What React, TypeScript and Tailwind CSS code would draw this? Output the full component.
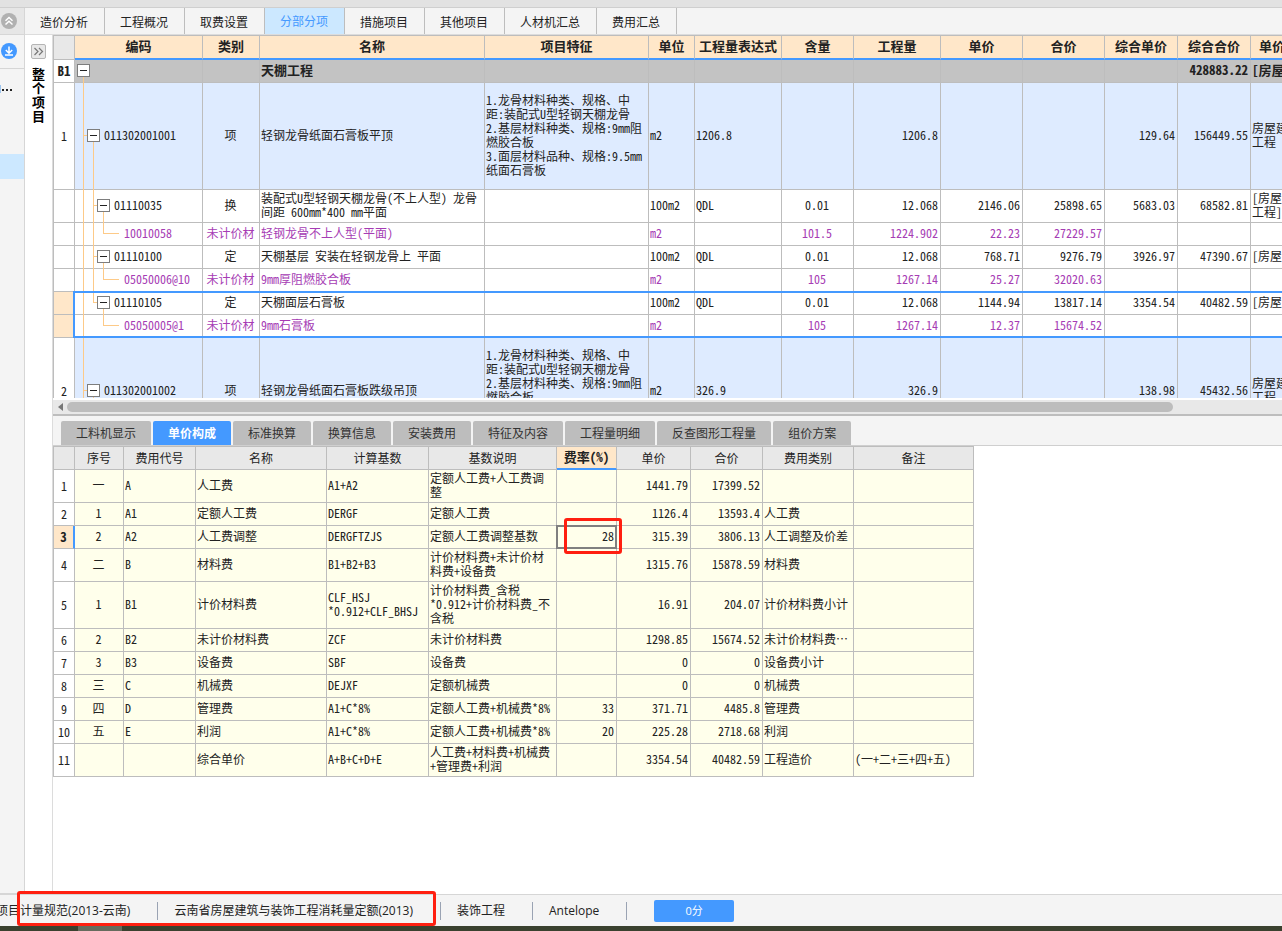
import React from "react";

type Align = "left" | "center" | "right";

const alignClass: Record<Align, string> = {
  left: "text-left",
  center: "text-center",
  right: "text-right",
};

interface Column {
  title: string;
  width: number;
  align: Align;
}

const mainTabs = ["造价分析", "工程概况", "取费设置", "分部分项", "措施项目", "其他项目", "人材机汇总", "费用汇总"];
const activeMainTab = "分部分项";

const detailTabs = [
  "工料机显示",
  "单价构成",
  "标准换算",
  "换算信息",
  "安装费用",
  "特征及内容",
  "工程量明细",
  "反查图形工程量",
  "组价方案",
];
const activeDetailTab = "单价构成";

const itemColumns: Column[] = [
  { title: "编码", width: 128, align: "left" },
  { title: "类别", width: 57, align: "center" },
  { title: "名称", width: 225, align: "left" },
  { title: "项目特征", width: 164, align: "left" },
  { title: "单位", width: 46, align: "left" },
  { title: "工程量表达式", width: 87, align: "left" },
  { title: "含量", width: 72, align: "center" },
  { title: "工程量", width: 87, align: "right" },
  { title: "单价", width: 82, align: "right" },
  { title: "合价", width: 82, align: "right" },
  { title: "综合单价", width: 73, align: "right" },
  { title: "综合合价", width: 73, align: "right" },
  { title: "单价", width: 44, align: "left" },
];

type Kind = "section" | "item" | "quota" | "material";

interface ItemRow {
  no: string;
  kind: Kind;
  code: string;
  /** Last child of its parent: the parent's guide line stops here. */
  last?: boolean;
  selected?: boolean;
  cells: string[];
}

const itemRows: ItemRow[] = [
  { no: "B1", kind: "section", code: "", cells: ["", "天棚工程", "", "", "", "", "", "", "", "", "428883.22", "[房屋"] },
  {
    no: "1",
    kind: "item",
    code: "011302001001",
    cells: [
      "项",
      "轻钢龙骨纸面石膏板平顶",
      "1.龙骨材料种类、规格、中\n距:装配式U型轻钢天棚龙骨\n2.基层材料种类、规格:9mm阻\n燃胶合板\n3.面层材料品种、规格:9.5mm\n纸面石膏板",
      "m2",
      "1206.8",
      "",
      "1206.8",
      "",
      "",
      "129.64",
      "156449.55",
      "房屋建\n工程",
    ],
  },
  {
    no: "",
    kind: "quota",
    code: "01110035",
    cells: [
      "换",
      "装配式U型轻钢天棚龙骨(不上人型) 龙骨\n间距 600mm*400 mm平面",
      "",
      "100m2",
      "QDL",
      "0.01",
      "12.068",
      "2146.06",
      "25898.65",
      "5683.03",
      "68582.81",
      "[房屋\n工程]",
    ],
  },
  {
    no: "",
    kind: "material",
    code: "10010058",
    cells: ["未计价材", "轻钢龙骨不上人型(平面)", "", "m2", "", "101.5", "1224.902", "22.23", "27229.57", "", "", ""],
  },
  {
    no: "",
    kind: "quota",
    code: "01110100",
    cells: [
      "定",
      "天棚基层 安装在轻钢龙骨上 平面",
      "",
      "100m2",
      "QDL",
      "0.01",
      "12.068",
      "768.71",
      "9276.79",
      "3926.97",
      "47390.67",
      "[房屋",
    ],
  },
  {
    no: "",
    kind: "material",
    code: "05050006@10",
    cells: ["未计价材", "9mm厚阻燃胶合板", "", "m2", "", "105", "1267.14", "25.27", "32020.63", "", "", ""],
  },
  {
    no: "",
    kind: "quota",
    code: "01110105",
    last: true,
    selected: true,
    cells: [
      "定",
      "天棚面层石膏板",
      "",
      "100m2",
      "QDL",
      "0.01",
      "12.068",
      "1144.94",
      "13817.14",
      "3354.54",
      "40482.59",
      "[房屋",
    ],
  },
  {
    no: "",
    kind: "material",
    code: "05050005@1",
    last: true,
    selected: true,
    cells: ["未计价材", "9mm石膏板", "", "m2", "", "105", "1267.14", "12.37", "15674.52", "", "", ""],
  },
  {
    no: "2",
    kind: "item",
    code: "011302001002",
    cells: [
      "项",
      "轻钢龙骨纸面石膏板跌级吊顶",
      "1.龙骨材料种类、规格、中\n距:装配式U型轻钢天棚龙骨\n2.基层材料种类、规格:9mm阻\n燃胶合板\n3.面层材料品种、规格:9.5mm\n纸面石膏板",
      "m2",
      "326.9",
      "",
      "326.9",
      "",
      "",
      "138.98",
      "45432.56",
      "房屋建\n工程",
    ],
  },
];

const feeColumns: Column[] = [
  { title: "序号", width: 49, align: "center" },
  { title: "费用代号", width: 72, align: "left" },
  { title: "名称", width: 131, align: "left" },
  { title: "计算基数", width: 102, align: "left" },
  { title: "基数说明", width: 128, align: "left" },
  { title: "费率(%)", width: 60, align: "right" },
  { title: "单价", width: 74, align: "right" },
  { title: "合价", width: 72, align: "right" },
  { title: "费用类别", width: 91, align: "left" },
  { title: "备注", width: 120, align: "left" },
];
const RATE_COLUMN = 5;
const CURRENT_FEE_ROW = 2;

const feeRows: string[][] = [
  ["一", "A", "人工费", "A1+A2", "定额人工费+人工费调\n整", "", "1441.79", "17399.52", "", ""],
  ["1", "A1", "定额人工费", "DERGF", "定额人工费", "", "1126.4", "13593.4", "人工费", ""],
  ["2", "A2", "人工费调整", "DERGFTZJS", "定额人工费调整基数", "28", "315.39", "3806.13", "人工调整及价差", ""],
  ["二", "B", "材料费", "B1+B2+B3", "计价材料费+未计价材\n料费+设备费", "", "1315.76", "15878.59", "材料费", ""],
  [
    "1",
    "B1",
    "计价材料费",
    "CLF_HSJ\n*0.912+CLF_BHSJ",
    "计价材料费_含税\n*0.912+计价材料费_不\n含税",
    "",
    "16.91",
    "204.07",
    "计价材料费小计",
    "",
  ],
  ["2", "B2", "未计价材料费", "ZCF", "未计价材料费", "", "1298.85", "15674.52", "未计价材料费⋯", ""],
  ["3", "B3", "设备费", "SBF", "设备费", "", "0", "0", "设备费小计", ""],
  ["三", "C", "机械费", "DEJXF", "定额机械费", "", "0", "0", "机械费", ""],
  ["四", "D", "管理费", "A1+C*8%", "定额人工费+机械费*8%", "33", "371.71", "4485.8", "管理费", ""],
  ["五", "E", "利润", "A1+C*8%", "定额人工费+机械费*8%", "20", "225.28", "2718.68", "利润", ""],
  ["", "", "综合单价", "A+B+C+D+E", "人工费+材料费+机械费\n+管理费+利润", "", "3354.54", "40482.59", "工程造价", "(一+二+三+四+五)"],
];

const rowHeight: Record<Kind, string> = {
  section: "h-[23px]",
  item: "h-[107px]",
  quota: "h-[23px]",
  material: "h-[23px]",
};

const rowTone: Record<Kind, string> = {
  section: "bg-[#c3c3c3] font-bold text-[13px]",
  item: "bg-[#deebff]",
  quota: "bg-white",
  material: "bg-white text-[#a63cb4]",
};

const guide = "absolute w-px bg-[#fdca88]";
const stub = "absolute top-1/2 -mt-px h-px bg-[#fdca88]";

function ToggleBox({ label }: { label: string }) {
  return (
    <button
      type="button"
      aria-label={label}
      className="relative flex size-[13px] shrink-0 items-center justify-center border border-[#7d7d7d] bg-white"
    >
      <span className="h-px w-[7px] bg-[#222]" />
    </button>
  );
}

function TreeCell({ row }: { row: ItemRow }) {
  const { kind, last } = row;
  return (
    <td className="relative border-r border-b border-[#bdbdbd] p-0 pb-0.5">
      <span className={`${guide} left-2 -bottom-px ${kind === "section" ? "top-1/2" : "top-0"}`} />
      {kind === "item" && (
        <>
          <span className={`${stub} left-2 w-1`} />
          <span className={`${guide} top-1/2 -bottom-px left-[18px]`} />
        </>
      )}
      {kind === "quota" && (
        <>
          <span className={`${guide} top-0 left-[18px] ${last ? "bottom-1/2" : "-bottom-px"}`} />
          <span className={`${stub} left-[18px] w-1`} />
          <span className={`${guide} top-1/2 -bottom-px left-7`} />
        </>
      )}
      {kind === "material" && (
        <>
          {!last && <span className={`${guide} top-0 -bottom-px left-[18px]`} />}
          <span className={`${guide} top-0 bottom-1/2 left-7`} />
          <span className={`${stub} left-7 w-4`} />
        </>
      )}
      {kind === "section" && (
        <div className="flex items-center pl-0.5">
          <ToggleBox label="折叠 B1" />
        </div>
      )}
      {kind === "item" && (
        <div className="flex items-center gap-1 pl-3">
          <ToggleBox label={`折叠 ${row.code}`} />
          {row.code}
        </div>
      )}
      {kind === "quota" && (
        <div className="flex items-center gap-1 pl-[22px]">
          <ToggleBox label={`折叠 ${row.code}`} />
          {row.code}
        </div>
      )}
      {kind === "material" && <div className="pl-[49px]">{row.code}</div>}
    </td>
  );
}

function ItemTable() {
  return (
    <table className="w-max table-fixed border-separate border-spacing-0 border-t border-l border-[#bdbdbd] text-xs leading-[14px] whitespace-pre text-[#222] [font-feature-settings:'hwid']">
      <colgroup>
        <col style={{ width: 21 }} />
        {itemColumns.map((c, i) => (
          <col key={i} style={{ width: c.width }} />
        ))}
      </colgroup>
      <thead>
        <tr className="h-6 text-[13px]">
          <td className="border-r border-b border-[#bdbdbd] bg-[#e8e8e8] p-0" />
          {itemColumns.map((c, i) => (
            <th
              key={i}
              scope="col"
              className={`border-r border-b-2 border-r-[#bdbdbd] border-b-[#4499ff] bg-[#ffe7c9] p-0 pb-0.5 font-bold ${
                i === itemColumns.length - 1 ? "pl-2 text-left" : "text-center"
              }`}
            >
              {c.title}
            </th>
          ))}
        </tr>
      </thead>
      <tbody>
        {itemRows.map((row, r) => (
          <tr key={r} className={`${row.code === "01110035" ? "h-[33px]" : rowHeight[row.kind]} ${rowTone[row.kind]}`}>
            <th
              scope="row"
              className={`relative border-r border-b border-[#bdbdbd] p-0 text-center text-[#222] ${
                row.kind === "section" ? "font-bold" : "font-normal"
              } ${row.selected ? "bg-[#ffe7c9]" : "bg-white"}`}
            >
              {row.no}
              {row.selected && row.kind === "quota" && (
                <span className="pointer-events-none absolute -top-px left-[19px] z-10 h-[47px] w-[3000px] border-2 border-[#4499ff]" />
              )}
            </th>
            <TreeCell row={row} />
            {row.cells.map((text, i) => (
              <td
                key={i}
                className={`border-r border-b border-[#bdbdbd] pt-0 pr-0.5 pb-0.5 pl-px ${alignClass[itemColumns[i + 1].align]}`}
              >
                {text}
              </td>
            ))}
          </tr>
        ))}
      </tbody>
    </table>
  );
}

function FeeTable() {
  return (
    <table className="w-max table-fixed border-separate border-spacing-0 border-t border-l border-[#bdbdbd] text-xs leading-[14px] whitespace-pre text-[#222] [font-feature-settings:'hwid']">
      <colgroup>
        <col style={{ width: 21 }} />
        {feeColumns.map((c, i) => (
          <col key={i} style={{ width: c.width }} />
        ))}
      </colgroup>
      <thead>
        <tr className="h-[23px]">
          <td className="border-r border-b border-[#bdbdbd] bg-[#e8e8e8] p-0" />
          {feeColumns.map((c, i) => (
            <th
              key={i}
              scope="col"
              className={`border-r border-r-[#bdbdbd] p-0 text-center ${
                i === RATE_COLUMN
                  ? "border-b-2 border-b-[#4499ff] bg-[#ffe7c9] pb-0.5 text-[13px] font-bold"
                  : "border-b border-b-[#bdbdbd] bg-[#e8e8e8] font-normal"
              }`}
            >
              {c.title}
            </th>
          ))}
        </tr>
      </thead>
      <tbody>
        {feeRows.map((cells, r) => {
          const lines = Math.max(...cells.map((t) => t.split("\n").length));
          const current = r === CURRENT_FEE_ROW;
          return (
            <tr
              key={r}
              className={`bg-[#ffffeb] ${lines === 1 ? "h-[23px]" : lines === 2 ? "h-[33px]" : "h-[47px]"}`}
            >
              <th
                scope="row"
                className={`border-b border-b-[#bdbdbd] p-0 text-center ${
                  current
                    ? "border-r-2 border-r-[#4499ff] bg-[#ffe7c9] text-[13px] font-bold"
                    : "border-r border-r-[#bdbdbd] bg-white font-normal"
                }`}
              >
                {r + 1}
              </th>
              {cells.map((text, i) => (
                <td
                  key={i}
                  className={`relative border-r border-b border-[#bdbdbd] pt-0 pr-0.5 pb-0.5 pl-px ${alignClass[feeColumns[i].align]}`}
                >
                  {text}
                  {current && i === RATE_COLUMN && (
                    <>
                      <span className="pointer-events-none absolute -inset-px z-10 border-2 border-[#808080]" />
                      <span className="pointer-events-none absolute -top-2 left-[7px] z-20 h-9 w-[58px] rounded-[3px] border-3 border-[#ff1f10]" />
                    </>
                  )}
                </td>
              ))}
            </tr>
          );
        })}
      </tbody>
    </table>
  );
}

function Sidebar() {
  return (
    <aside className="flex w-[25px] shrink-0 flex-col border-r border-b border-[#d6d6d6] bg-[#f4f4f4]">
      <div className="flex h-[27px] items-center border-b border-[#d6d6d6] bg-[#e6e6e6] pl-px">
        <button type="button" aria-label="收起" className="size-4">
          <svg viewBox="0 0 16 16" className="size-4" fill="none">
            <circle cx="8" cy="8" r="8" fill="#b1b1b1" />
            <path d="M4.5 7.8 8 4.5l3.5 3.3M4.5 11.5 8 8.2l3.5 3.3" stroke="#fff" strokeWidth="1.5" />
          </svg>
        </button>
      </div>
      <div className="flex h-[34px] items-start border-b border-[#d6d6d6] pt-2 pl-px">
        <button type="button" aria-label="下载" className="size-4">
          <svg viewBox="0 0 16 16" className="size-4" fill="none">
            <circle cx="8" cy="8" r="8" fill="#4499ff" />
            <path d="M8 3.5v6.3M4.8 7 8 10.2 11.2 7M4 12h8" stroke="#fff" strokeWidth="1.5" />
          </svg>
        </button>
      </div>
      <div className="flex h-[85px] items-start gap-px pt-3">
        <span className="mt-1 h-2 w-px bg-[#9cc4ee]" />
        <span className="mt-2 flex gap-0.5">
          <i className="size-0.5 bg-[#222]" />
          <i className="size-0.5 bg-[#222]" />
          <i className="size-0.5 bg-[#222]" />
        </span>
      </div>
      <div className="h-[25px] bg-[#cce8ff]" />
    </aside>
  );
}

function FooterDivider() {
  return <span className="mr-4 ml-[27px] h-[18px] w-px bg-[#9aa3b3]" />;
}

export default function App() {
  return (
    <div
      lang="zh-CN"
      className="flex h-screen flex-col overflow-hidden bg-white font-['Noto_Sans_CJK_SC',sans-serif] text-xs text-[#222]"
    >
      <div className="h-2 shrink-0 border-b border-[#cfcfcf] bg-[#e2e2e2]" />

      <div className="flex min-h-0 flex-1">
        <Sidebar />
        <div className="flex min-w-0 flex-1 flex-col">
          <div role="tablist" className="flex h-[27px] shrink-0 border-b border-[#dcdcdc] bg-[#f4f4f4]">
            {mainTabs.map((tab) => (
              <button
                key={tab}
                type="button"
                role="tab"
                aria-selected={tab === activeMainTab}
                className={`border-r border-[#bdbdbd] pr-4 pl-[15px] ${
                  tab === activeMainTab ? "bg-[#cce8ff] text-[#4499ff]" : "pt-0.5"
                }`}
              >
                {tab}
              </button>
            ))}
          </div>

          <div className="flex min-h-0 flex-1">
            <div className="flex w-7 shrink-0 flex-col items-center border-r border-[#dcdcdc] bg-white pt-[9px]">
              <button
                type="button"
                aria-label="展开"
                className="flex size-[15px] items-center justify-center rounded-xs border border-[#b5b5b5] bg-[#e8e8e8]"
              >
                <svg viewBox="0 0 11 11" className="size-[11px]" fill="none" stroke="#777" strokeWidth="1.2">
                  <path d="M1.5 2 5 5.5 1.5 9M6 2l3.5 3.5L6 9" />
                </svg>
              </button>
              <div className="mt-2 w-[13px] text-[13px] leading-[14px] font-bold text-black">整个项目</div>
            </div>

            <main className="flex min-w-0 flex-1 flex-col">
              <div className="h-[363px] shrink-0 overflow-hidden">
                <ItemTable />
              </div>
              <div className="mt-0.5 flex h-[14px] shrink-0 items-center bg-[#e8e8e8] pl-[5px]">
                <svg viewBox="0 0 5 8" className="h-2 w-[5px]" fill="#777">
                  <path d="M5 0v8L0 4z" />
                </svg>
                <div className="mr-[109px] ml-1 h-2.5 flex-1 rounded-full bg-[#bdbdbd]" />
              </div>
              <div
                role="tablist"
                className="flex h-8 shrink-0 gap-0.5 border-t-2 border-b border-t-[#bdbdbd] border-b-[#cfcfcf] bg-[#f4f4f4] pt-[5px] pl-2"
              >
                {detailTabs.map((tab) => (
                  <button
                    key={tab}
                    type="button"
                    role="tab"
                    aria-selected={tab === activeDetailTab}
                    className={`rounded-t-xs px-[15px] ${
                      tab === activeDetailTab ? "bg-[#4499ff] font-bold text-white" : "bg-[#bdbdbd] text-[#333]"
                    }`}
                  >
                    {tab}
                  </button>
                ))}
              </div>
              <div className="min-h-0 flex-1 overflow-hidden">
                <FeeTable />
              </div>
            </main>
          </div>
        </div>
      </div>

      <footer className="relative flex h-8 shrink-0 items-center border-t border-[#d6d6d6] bg-[#f4f4f4] font-['Open_Sans','Noto_Sans_CJK_SC',sans-serif] leading-4">
        <span className="-ml-1">项目计量规范(2013-云南)</span>
        <FooterDivider />
        <span>云南省房屋建筑与装饰工程消耗量定额(2013)</span>
        <FooterDivider />
        <span>装饰工程</span>
        <FooterDivider />
        <span>Antelope</span>
        <span className="ml-[27px] h-[18px] w-px bg-[#9aa3b3]" />
        <button type="button" className="ml-[27px] h-[22px] w-20 rounded-xs bg-[#4499ff] text-[11px] text-white">
          0分
        </button>
        <span className="pointer-events-none absolute -top-1 left-[17px] z-20 h-[35px] w-[419px] rounded-[3px] border-3 border-[#ff1f10]" />
      </footer>
      <div className="flex h-[5px] shrink-0 bg-[#3a412f] pl-[78px]">
        <span className="w-11 bg-[#666c5e]" />
      </div>
    </div>
  );
}
